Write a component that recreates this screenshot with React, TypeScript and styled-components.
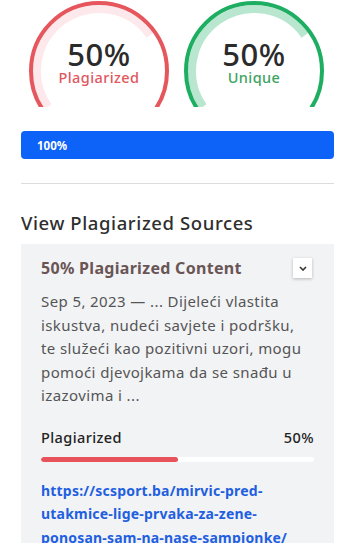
import React from "react";
import styled, { createGlobalStyle } from "styled-components";

const Global = createGlobalStyle`
  html, body { margin: 0; padding: 0; background: #ffffff; }
  body { font-family: "Noto Sans", "Open Sans", Arial, sans-serif; -webkit-font-smoothing: antialiased; }
  * { box-sizing: border-box; }
`;

const Page = styled.div`
  width: 337px;
  height: 543px;
  overflow: hidden;
  padding: 0 3px 0 21px;
`;

const GaugeRow = styled.div`
  display: flex;
  gap: 15px;
  padding-left: 8px;
`;

const GaugeBox = styled.div`
  position: relative;
  width: 140px;
  height: 107px;
  overflow: hidden;
  display: flex;
  flex-direction: column;
  align-items: center;
  padding-top: 36px;
`;

const GaugeSvg = styled.svg`
  position: absolute;
  left: 0;
  top: 0;
`;

const GaugeValue = styled.div`
  position: relative;
  font-size: 31px;
  font-weight: 500;
  line-height: 36px;
  color: #2b2b2b;
  letter-spacing: 0.5px;
`;

const GaugeLabel = styled.div<{ $color: string }>`
  position: relative;
  margin-top: -4px;
  font-size: 14.5px;
  font-weight: 500;
  line-height: 18px;
  color: ${(p) => p.$color};
  letter-spacing: 0.4px;
`;

const TotalBar = styled.div`
  margin-top: 24px;
  height: 28px;
  background: #0d62f7;
  border-radius: 4px;
  display: flex;
  align-items: center;
  padding-left: 16px;
  color: #ffffff;
  font-size: 11.5px;
  font-weight: 700;
`;

const Divider = styled.hr`
  margin: 24px 0 0;
  border: none;
  border-top: 1px solid #dcdcdc;
`;

const SectionTitle = styled.h2`
  margin: 27px 0 0;
  font-size: 18.5px;
  font-weight: 500;
  color: #2e2e2e;
  line-height: 24px;
  letter-spacing: 0.6px;
`;

const Card = styled.div`
  margin-top: 9px;
  background: #f2f3f5;
  padding: 12px 20px 20px 20px;
`;

const CardHeader = styled.div`
  display: flex;
  align-items: center;
  justify-content: space-between;
`;

const CardTitle = styled.div`
  font-size: 16px;
  font-weight: 700;
  color: #6a5555;
  line-height: 24px;
  letter-spacing: 0.3px;
`;

const ToggleButton = styled.button`
  width: 19px;
  height: 20px;
  margin-right: 2px;
  padding: 0;
  border: none;
  background: #ffffff;
  box-shadow: 0 1px 3px rgba(0, 0, 0, 0.25);
  display: flex;
  align-items: center;
  justify-content: center;
`;

const Snippet = styled.p`
  margin: 10px 0 0;
  padding-right: 6px;
  font-size: 15px;
  line-height: 23.5px;
  color: #555555;
  letter-spacing: 0.4px;
`;

const StatRow = styled.div`
  margin-top: 19px;
  display: flex;
  justify-content: space-between;
  font-size: 14.5px;
  font-weight: 500;
  color: #222222;
  line-height: 20px;
  letter-spacing: 0.4px;
`;

const Track = styled.div`
  margin-top: 10px;
  height: 5px;
  border-radius: 3px;
  background: #ffffff;
  overflow: hidden;
`;

const Fill = styled.div`
  height: 100%;
  background: #e8525a;
  border-radius: 3px;
`;

const SourceLink = styled.a`
  display: block;
  margin-top: 17px;
  font-size: 14px;
  font-weight: 700;
  line-height: 23.5px;
  color: #1f5fe0;
  text-decoration: none;
  letter-spacing: 0.2px;
  word-break: break-word;
`;

function Gauge({
  ring,
  pale,
  labelColor,
  label,
}: {
  ring: string;
  pale: string;
  labelColor: string;
  label: string;
}) {
  return (
    <GaugeBox>
      <GaugeSvg width="140" height="107" viewBox="0 0 140 107">
        <path
          d="M 19.2 106.6 A 62 62 0 0 1 120.8 35.4"
          fill="none"
          stroke={pale}
          strokeWidth="8"
        />
        <circle cx="70" cy="71" r="68" fill="none" stroke={ring} strokeWidth="4" />
      </GaugeSvg>
      <GaugeValue>50%</GaugeValue>
      <GaugeLabel $color={labelColor}>{label}</GaugeLabel>
    </GaugeBox>
  );
}

export default function App() {
  const pct = 50;
  return (
    <>
      <Global />
      <Page>
        <GaugeRow>
          <Gauge ring="#e5565d" pale="#fde9eb" labelColor="#e0575e" label="Plagiarized" />
          <Gauge ring="#1eae62" pale="#b8e6cf" labelColor="#3da35f" label="Unique" />
        </GaugeRow>
        <TotalBar>100%</TotalBar>
        <Divider />
        <SectionTitle>View Plagiarized Sources</SectionTitle>
        <Card>
          <CardHeader>
            <CardTitle>50% Plagiarized Content</CardTitle>
            <ToggleButton aria-label="toggle">
              <svg width="8" height="5" viewBox="0 0 8 5">
                <path d="M1 1 L4 4 L7 1" fill="none" stroke="#333" strokeWidth="1.6" />
              </svg>
            </ToggleButton>
          </CardHeader>
          <Snippet>
            Sep 5, 2023 — ... Dijeleći vlastita iskustva, nudeći savjete i podršku, te služeći kao
            pozitivni uzori, mogu pomoći djevojkama da se snađu u izazovima i ...
          </Snippet>
          <StatRow>
            <span>Plagiarized</span>
            <span>50%</span>
          </StatRow>
          <Track>
            <Fill style={{ width: `${pct}%` }} />
          </Track>
          <SourceLink href="#">
            https://scsport.ba/mirvic-pred-utakmice-lige-prvaka-za-zene-ponosan-sam-na-nase-sampionke/
          </SourceLink>
        </Card>
      </Page>
    </>
  );
}
